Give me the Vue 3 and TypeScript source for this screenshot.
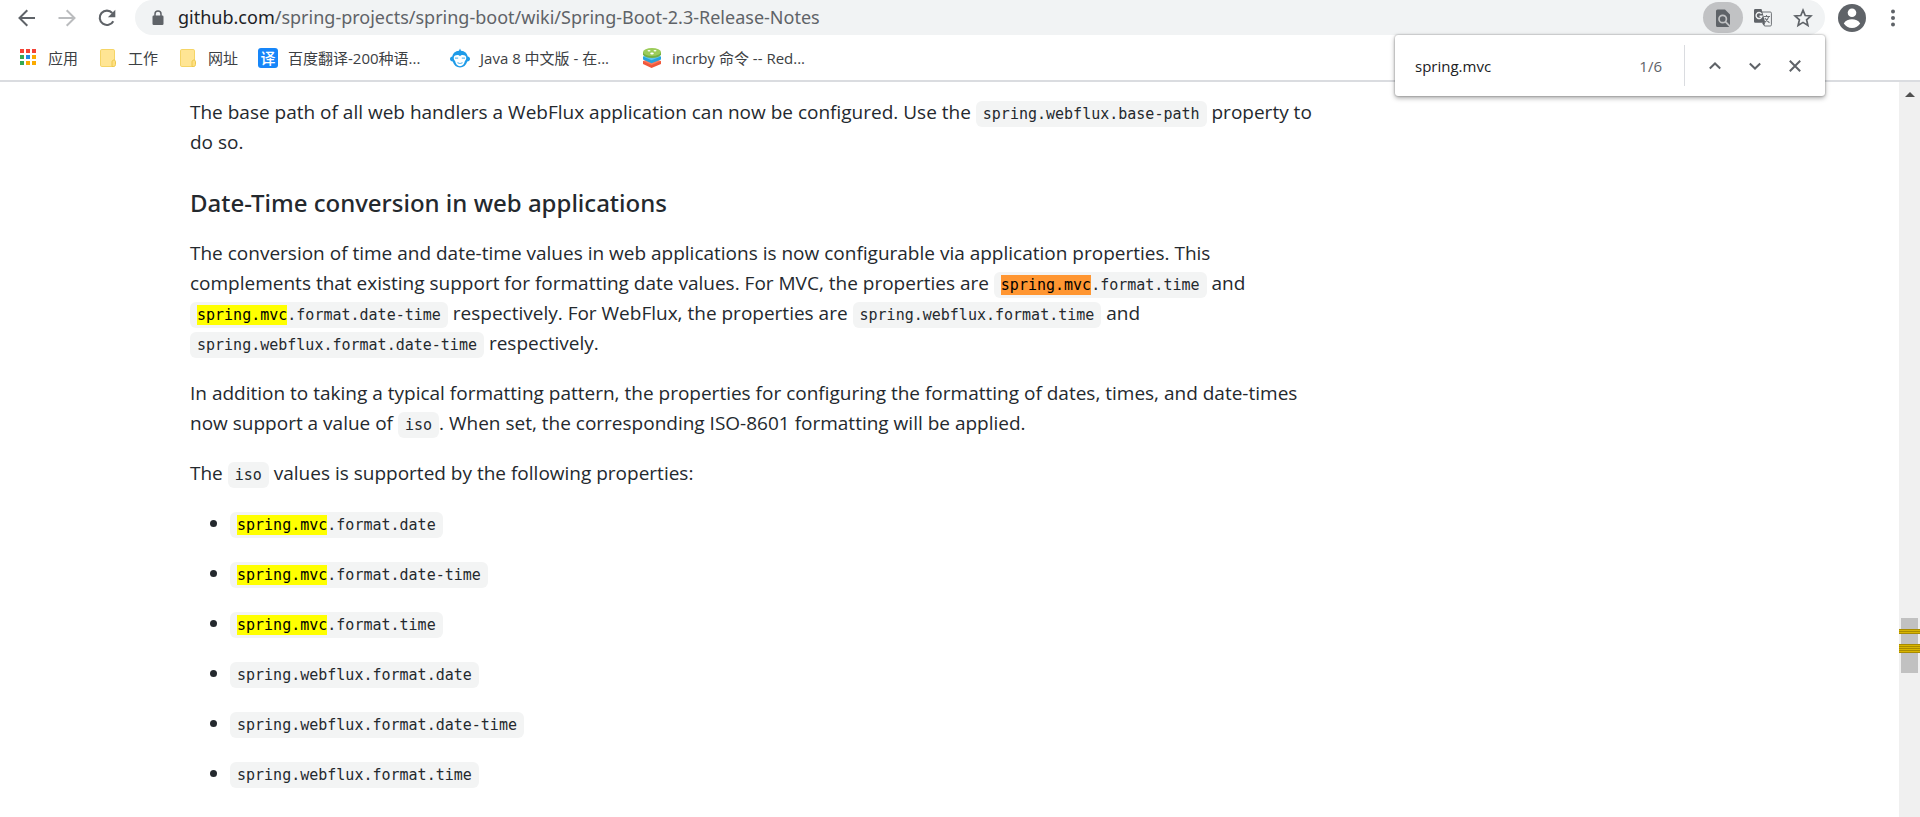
<script setup lang="ts">
import { ref } from 'vue'

interface Property {
  match: string
  rest: string
}

const query = ref('spring.mvc')

const properties: Property[] = [
  { match: 'spring.mvc', rest: '.format.date' },
  { match: 'spring.mvc', rest: '.format.date-time' },
  { match: 'spring.mvc', rest: '.format.time' },
  { match: '', rest: 'spring.webflux.format.date' },
  { match: '', rest: 'spring.webflux.format.date-time' },
  { match: '', rest: 'spring.webflux.format.time' },
]

const appDots: string[] = [
  '#f44336', '#f44336', '#f44336',
  '#34a853', '#1e88e5', '#fbaa00',
  '#34a853', '#fbaa00', '#fbaa00',
]
</script>

<template>
  <div class="browser">
    <header class="chrome">
      <div class="toolbar">
        <nav class="nav">
          <button type="button" aria-label="Back">
            <svg width="20" height="20" viewBox="0 0 20 20" fill="none" stroke="#5f6368" stroke-width="2"><path d="M18 10H2.500M10.300 2.200L2.500 10l7.800 7.800" /></svg>
          </button>
          <button type="button" aria-label="Forward">
            <svg width="20" height="20" viewBox="0 0 20 20" fill="none" stroke="#babcbe" stroke-width="2"><path d="M1.500 10h16M9.700 2.200L17.500 10l-7.800 7.800" /></svg>
          </button>
          <button type="button" aria-label="Reload">
            <svg width="20" height="20" viewBox="0 0 20 20"><path d="M16.300 13.200A7.200 7.200 0 1 1 15.300 5" fill="none" stroke="#5f6368" stroke-width="2.100" /><path d="M18.300 1.800v7.400h-7.400z" fill="#5f6368" /></svg>
          </button>
        </nav>
        <div class="omnibox">
          <svg width="12" height="16" viewBox="0 0 12 16"><rect x="0.500" y="5.500" width="11" height="9.500" rx="1.200" fill="#5f6368" /><path d="M3 6V4a3 3 0 0 1 6 0v2" fill="none" stroke="#5f6368" stroke-width="1.500" /></svg>
          <a class="url" href="#"><b>github.com</b>/spring-projects/spring-boot/wiki/Spring-Boot-2.3-Release-Notes</a>
          <button type="button" class="find-badge" aria-label="Find in page">
            <svg width="20" height="20" viewBox="0 0 20 20"><path d="M4.500 1.500h7.500l5 5v11a1.500 1.500 0 0 1-1.500 1.500h-11a1.500 1.500 0 0 1-1.500-1.500V3a1.500 1.500 0 0 1 1.500-1.500z" fill="#5f6368" /><circle cx="9.700" cy="11" r="3.700" fill="none" stroke="#c1c2c4" stroke-width="1.700" /><path d="M12.300 13.600l5 5" stroke="#c1c2c4" stroke-width="1.900" /></svg>
          </button>
          <button type="button" aria-label="Translate this page">
            <svg width="20" height="20" viewBox="0 0 20 20"><path d="M7.500 4h9.700a1.200 1.200 0 0 1 1.200 1.200v11.600a1.200 1.200 0 0 1-1.200 1.200h-5.700z" fill="#f1f3f4" stroke="#6f7377" stroke-width="1" /><path d="M2.200 1h6.300l3.800 13.800H2.200A1.200 1.200 0 0 1 1 13.600V2.200A1.200 1.200 0 0 1 2.200 1z" fill="#5f6368" /><path d="M8.500 5.800A3 3 0 1 0 9 8.200H6.500" fill="none" stroke="#f1f3f4" stroke-width="1.400" /><path d="M10.500 8.500h6.500M13.500 7v1.500M15.700 8.700c-.6 2.500-2 4.200-4 5.500M12 10c1 2 2.500 3.500 4.500 4.700" fill="none" stroke="#6f7377" stroke-width="1.100" /><path d="M9 14.800h3.300L10.500 17.500z" fill="#5f6368" /></svg>
          </button>
          <button type="button" aria-label="Bookmark this page">
            <svg width="20" height="20" viewBox="0 0 20 20"><path d="M10 2.200l2.200 5.300 5.700.5-4.300 3.800 1.300 5.600L10 14.400l-4.900 3 1.300-5.600L2.100 8l5.700-.5z" fill="none" stroke="#5f6368" stroke-width="1.700" /></svg>
          </button>
        </div>
        <button type="button" class="avatar" aria-label="Profile">
          <svg width="28" height="28" viewBox="0 0 28 28"><circle cx="14" cy="14" r="14" fill="#5f6368" /><circle cx="14" cy="8.800" r="4.300" fill="#fff" /><path d="M5.800 19.400c1.500-2.700 5-4.100 8.200-4.100s6.700 1.400 8.200 4.100c-1.700 2.600-4.700 4.500-8.200 4.500s-6.500-1.900-8.200-4.500z" fill="#fff" /></svg>
        </button>
        <button type="button" class="menu" aria-label="Menu">
          <svg width="6" height="20" viewBox="0 0 6 20" fill="#5f6368"><circle cx="3" cy="3.500" r="2" /><circle cx="3" cy="10" r="2" /><circle cx="3" cy="16.500" r="2" /></svg>
        </button>
      </div>

      <nav class="bookmarks">
        <a href="#">
          <svg width="20" height="20" viewBox="0 0 20 20"><rect v-for="(c, i) in appDots" :key="i" :x="2 + (i % 3) * 6" :y="1 + Math.floor(i / 3) * 6" width="4" height="4" :fill="c" /></svg>
          <span>应用</span>
        </a>
        <a href="#">
          <svg width="20" height="20" viewBox="0 0 20 20"><rect x="2.500" y="1.500" width="14" height="17" rx="1.300" fill="#ffe594" stroke="#f5d566" /><path d="M14 18.500v-4.500c0-1.200.8-2 1.900-2s1.600.8 1.600 1.800v2.700c0 1.200-.8 2-1.900 2z" fill="#ffe082" stroke="#edc84c" /></svg>
          <span>工作</span>
        </a>
        <a href="#">
          <svg width="20" height="20" viewBox="0 0 20 20"><rect x="2.500" y="1.500" width="14" height="17" rx="1.300" fill="#ffe594" stroke="#f5d566" /><path d="M14 18.500v-4.500c0-1.200.8-2 1.900-2s1.600.8 1.600 1.800v2.700c0 1.200-.8 2-1.900 2z" fill="#ffe082" stroke="#edc84c" /></svg>
          <span>网址</span>
        </a>
        <a href="#">
          <i class="fanyi">译</i>
          <span class="long">百度翻译-200种语...</span>
        </a>
        <a href="#">
          <svg width="20" height="20" viewBox="0 0 20 20"><path d="M10 .5l1 2.200c3.800.2 6.300 2.800 6.700 5.800 1.300.2 2.300 1.100 2.300 2.400s-1.200 2.500-2.700 2.600C16 17.200 13.500 19.500 10 19.500S4 17.200 2.700 13.500C1.200 13.400 0 12.200 0 10.900s1-2.200 2.300-2.400C2.700 5.500 5.200 2.900 9 2.700z" fill="#1e9be8" /><path d="M10 8.200C8.800 6.600 4.300 6.500 3.800 9.600c-.3 1.800.8 3 1.300 3.500.5 2.900 2.400 5.200 4.900 5.200s4.400-2.300 4.900-5.200c.5-.5 1.600-1.700 1.300-3.500-.5-3.100-5-3-6.200-1.400z" fill="#fff" /><path d="M5 10.200h3.200M11.800 10.200H15M7.500 14.500c1.500 1.200 3.500 1.200 5 0" fill="none" stroke="#63bdf0" stroke-width="1.200" /></svg>
          <span class="long">Java 8 中文版 - 在...</span>
        </a>
        <a href="#">
          <svg width="20" height="20" viewBox="0 0 20 20"><path d="M1 13v3l8.500 4 9.500-4v-3z" fill="#f0583c" /><path d="M1 13l9-3.500 9 3.500-9.500 4z" fill="#ff7a5c" /><path d="M1 8.500v3l8.500 3.700 9.500-3.700v-3z" fill="#27a3dd" /><path d="M1 8.500L10 5l9 3.500-9.500 3.700z" fill="#5cc4ef" /><path d="M1 4v3c2 2 5 3 9 3s7-1 9-3V4z" fill="#76b043" /><ellipse cx="10" cy="4" rx="9" ry="4" fill="#9ccc5a" /><g fill="#fff"><ellipse cx="7" cy="2.800" rx="1.500" ry=".8" /><ellipse cx="13" cy="2.800" rx="1.500" ry=".8" /><ellipse cx="10" cy="5.500" rx="1.800" ry=".9" /></g></svg>
          <span>incrby 命令 -- Red...</span>
        </a>
      </nav>

      <form class="findbar" role="search" @submit.prevent>
        <input v-model="query" type="text" aria-label="Find" />
        <output>1/6</output>
        <div class="find-actions">
          <button type="button" aria-label="Previous">
            <svg width="20" height="20" viewBox="0 0 20 20"><path d="M4.800 12.500L10 7.500l5.200 5" /></svg>
          </button>
          <button type="button" aria-label="Next">
            <svg width="20" height="20" viewBox="0 0 20 20"><path d="M4.800 7.500L10 12.500l5.200-5" /></svg>
          </button>
          <button type="button" aria-label="Close">
            <svg width="20" height="20" viewBox="0 0 20 20"><path d="M4.800 4.800l10.400 10.400M15.200 4.800L4.800 15.200" /></svg>
          </button>
        </div>
      </form>
    </header>

    <div class="viewport">
      <main class="article">
        <p>The base path of all web handlers a WebFlux application can now be configured. Use the <code>spring.webflux.base-path</code> property to do so.</p>
        <h3>Date-Time conversion in web applications</h3>
        <p>The conversion of time and date-time values in web applications is now configurable via application properties. This complements that existing support for formatting date values. For MVC, the properties are <code><mark class="current">spring.mvc</mark>.format.time</code> and <code><mark>spring.mvc</mark>.format.date-time</code> respectively. For WebFlux, the properties are <code>spring.webflux.format.time</code> and <code>spring.webflux.format.date-time</code> respectively.</p>
        <p>In addition to taking a typical formatting pattern, the properties for configuring the formatting of dates, times, and date-times now support a value of <code>iso</code>. When set, the corresponding ISO-8601 formatting will be applied.</p>
        <p>The <code>iso</code> values is supported by the following properties:</p>
        <ul>
          <li v-for="p in properties" :key="p.match + p.rest"><code><mark v-if="p.match">{{ p.match }}</mark>{{ p.rest }}</code></li>
        </ul>
      </main>
      <div class="scrollbar" aria-hidden="true">
        <svg class="up" width="10" height="5" viewBox="0 0 10 5"><path d="M0 5l5-5 5 5z" fill="#505050" /></svg>
        <div class="thumb">
          <i class="tick single"></i>
          <i class="tick group"></i>
        </div>
      </div>
    </div>
  </div>
</template>

<style>
body {
  margin: 0;
  background: #fff;
}
</style>

<style scoped>
.browser {
  display: flex;
  flex-direction: column;
  height: 100vh;
  overflow: hidden;
  background: #fff;
  font-family: "Open Sans", "Noto Sans CJK SC", sans-serif;
}

button {
  display: grid;
  place-items: center;
  padding: 0;
  border: 0;
  background: none;
}

svg {
  display: block;
  flex: none;
}

a {
  color: inherit;
  text-decoration: none;
}

.chrome {
  position: relative;
  border-bottom: 2px solid #dadce0;
}

.toolbar {
  display: flex;
  align-items: center;
  height: 35px;
  padding-right: 24px;
}

.nav {
  display: flex;
  gap: 20px;
  width: 118px;
  padding-left: 17px;
}

.omnibox {
  display: flex;
  flex: 1;
  align-items: center;
  gap: 20px;
  height: 35px;
  padding: 0 12px 0 17px;
  border-radius: 18px;
  background: #f1f3f4;
}

.url {
  flex: 1;
  margin-left: -6px;
  color: #5f6368;
  font: 18px/24px "Noto Sans", sans-serif;
  padding-bottom: 2px;
}

.url b {
  color: #202124;
  font-weight: 400;
}

.find-badge {
  width: 40px;
  height: 31px;
  margin-right: -10px;
  border-radius: 16px;
  background: #c1c2c4;
}

.avatar {
  margin-left: 13px;
}

.menu {
  margin-left: 24px;
}

.bookmarks {
  display: flex;
  align-items: center;
  gap: 20px;
  height: 45px;
  padding-left: 18px;
  color: #3c4043;
  font-size: 15px;
  line-height: 20px;
}

.bookmarks a {
  display: flex;
  align-items: center;
  gap: 10px;
  white-space: nowrap;
}

.long {
  width: 142px;
}

.fanyi {
  width: 20px;
  border-radius: 3px;
  background: #1786f9;
  color: #fff;
  font-size: 15px;
  font-style: normal;
  font-weight: 500;
  text-align: center;
}

.findbar {
  position: absolute;
  z-index: 1;
  top: 35px;
  right: 95px;
  display: flex;
  align-items: center;
  box-sizing: border-box;
  width: 430px;
  height: 61px;
  padding: 0 20px;
  border-radius: 3px;
  background: #fff;
  box-shadow: 0 0 2px rgba(0, 0, 0, 0.4), 0 2px 5px rgba(0, 0, 0, 0.35);
  color: #5f6368;
  font-size: 15px;
}

.findbar input {
  flex: 1;
  min-width: 0;
  padding: 0;
  border: 0;
  outline: 0;
  background: none;
  color: #202124;
  font: inherit;
}

.find-actions {
  display: flex;
  align-items: center;
  gap: 20px;
  height: 41px;
  margin-left: 22px;
  padding-left: 20px;
  border-left: 1px solid #dadce0;
}

.find-actions path {
  fill: none;
  stroke: #5f6368;
  stroke-width: 2;
}

.viewport {
  display: flex;
  flex: 1;
  min-height: 0;
}

.article {
  flex: 1;
  padding: 15px 0 0 190px;
  overflow: hidden;
  color: #24292e;
  font-size: 19px;
  line-height: 30px;
}

.article p {
  max-width: 1134px;
  margin: 0 0 20px;
}

.article h3 {
  margin: 30px 0 20px;
  font: 500 24px/31px "Noto Sans", sans-serif;
}

.article ul {
  margin: 0;
  padding-left: 40px;
}

.article li {
  margin-bottom: 20px;
}

code {
  display: inline-block;
  margin: -2px 0;
  padding: 3px 7px;
  border-radius: 6px;
  background: #f3f4f4;
  font: 15px/20px "DejaVu Sans Mono", "Liberation Mono", monospace;
  white-space: nowrap;
}

mark {
  display: inline-block;
  background: #ff0;
  color: #000;
  line-height: 20px;
}

mark.current {
  background: #ff9632;
}

.scrollbar {
  display: flex;
  flex-direction: column;
  align-items: center;
  width: 21px;
  background: #f0f0f0;
}

.up {
  margin: 10px 0 521px;
}

.thumb {
  display: flex;
  flex-direction: column;
  align-items: center;
  gap: 10px;
  width: 17px;
  height: 44px;
  padding-top: 11px;
  background: #c1c1c1;
}

.tick {
  width: 21px;
  background: repeating-linear-gradient(#a88b00 0 1px, #d9b500 1px 2px);
}

.single {
  height: 5px;
}

.group {
  height: 9px;
}
</style>
